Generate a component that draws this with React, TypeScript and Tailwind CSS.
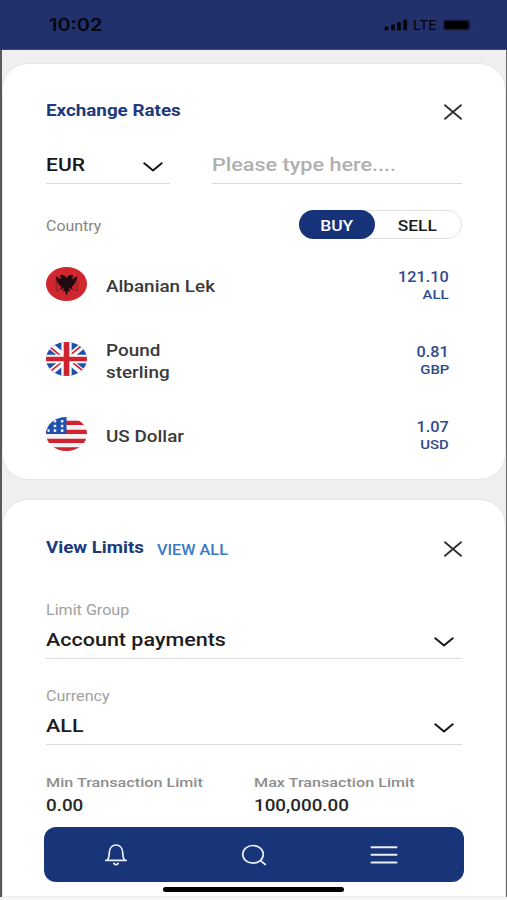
import { useState } from "react";
import type { ReactNode } from "react";
import clsx from "clsx";

const rates = [
  { code: "ALL", name: ["Albanian Lek"], rate: "121.10", flag: <AlbaniaFlag /> },
  { code: "GBP", name: ["Pound", "sterling"], rate: "0.81", flag: <UkFlag /> },
  { code: "USD", name: ["US Dollar"], rate: "1.07", flag: <UsFlag /> },
];

// Wide lettering: the label is stretched sideways from its left edge
function Wide({ children, className }: { children: ReactNode; className?: string }) {
  return (
    <span className={clsx("inline-block whitespace-nowrap", className ?? "origin-left scale-x-[1.19]")}>
      {children}
    </span>
  );
}

function AlbaniaFlag() {
  return (
    <svg viewBox="0 0 40 40" preserveAspectRatio="none" className="h-[34px] w-[41px]">
      <circle cx="20" cy="20" r="20" fill="#cf2630" />
      <path d="M10 11.500v17M30 11.500v17M10 28l7-3M30 28l-7-3" stroke="#7a1a22" strokeWidth="0.9" />
      <path
        d="M20 14l-1.500-3-3-1.500-2 1.500 2 1.500-1.500 2-4-3 1 5 1 .500-.500 2 2 .500-.500 2.500 2.500 0-1 3.500 3-1.500 .500 2-1.500 2 2.500 0 1 4.500 1-4.500 2.500 0-1.500-2 .500-2 3 1.500-1-3.500 2.500 0-.500-2.500 2-.500-.500-2 1-.500 1-5-4 3-1.500-2 2-1.500-2-1.500-3 1.500z"
        fill="#1d0b10"
        stroke="#1d0b10"
        strokeWidth="0.8"
      />
    </svg>
  );
}

function UkFlag() {
  return (
    <svg viewBox="0 0 40 40" preserveAspectRatio="none" className="h-[34px] w-[41px]">
      <clipPath id="uk-clip">
        <circle cx="20" cy="20" r="20" />
      </clipPath>
      <g clipPath="url(#uk-clip)">
        <rect width="40" height="40" fill="#1f50ad" />
        <path d="M3 3l34 34M37 3L3 37" stroke="#fff" strokeWidth="7" />
        <path d="M4 6l12 12M36 34L24 22M35 4L24 15M4 35l12-12" stroke="#d0232f" strokeWidth="1.8" />
        <path d="M20 0v40M0 20h40" stroke="#fff" strokeWidth="10" />
        <path d="M20 0v40M0 20h40" stroke="#d0232f" strokeWidth="5.5" />
      </g>
    </svg>
  );
}

function UsFlag() {
  return (
    <svg viewBox="0 0 40 40" preserveAspectRatio="none" className="h-[34px] w-[41px]">
      <clipPath id="us-clip">
        <circle cx="20" cy="20" r="20" />
      </clipPath>
      <g clipPath="url(#us-clip)">
        <rect width="40" height="40" fill="#f4f2f4" />
        <path d="M0 7h40M0 17.500h40M0 28h40M0 38h40" stroke="#d0232f" strokeWidth="5" />
        <rect width="20" height="20" fill="#1f50ad" />
        <path
          d="M7.500 5h2.500M14.500 5h2.500M7.500 10.500h2.500M14.500 10.500h2.500M7.500 16h2.500M14.500 16h2.500M1.500 16h2"
          stroke="#e6ecf7"
          strokeWidth="3"
        />
      </g>
    </svg>
  );
}

function CloseIcon() {
  return (
    <svg viewBox="0 0 20 16" className="h-4 w-5" fill="none" stroke="#2e2e2e" strokeWidth="1.8" strokeLinecap="round">
      <path d="M2 1.200l16 13.600M18 1.200L2 14.800" />
    </svg>
  );
}

function ChevronIcon() {
  return (
    <svg viewBox="0 0 20 10" className="h-2.5 w-5" fill="none" stroke="#151515" strokeWidth="2" strokeLinecap="round" strokeLinejoin="round">
      <path d="M1.300 1.300L10 8.400l8.700-7.100" />
    </svg>
  );
}

function StatusBar() {
  return (
    <header className="flex h-[50px] items-center justify-between border-b border-[#3d4a7c] bg-[#22316c] pr-[32px] pl-[49px] text-[#05070f]">
      <span className="mt-px origin-left scale-x-[1.17] font-[Inter,sans-serif] text-[17px] leading-none font-semibold">10:02</span>
      <div className="flex items-center">
        <svg viewBox="0 0 24 12" className="h-3 w-6" fill="#05070f">
          <rect x="0.500" y="7.500" width="4" height="4" rx="1" />
          <rect x="7" y="5.500" width="4" height="6" rx="1" />
          <rect x="13" y="3" width="4" height="8.500" rx="1" />
          <rect x="19.200" y="0.500" width="4" height="11" rx="1" />
        </svg>
        <span className="mt-px ml-[5px] w-[24px] origin-left scale-x-[1.05] font-[Inter,sans-serif] text-[13px] leading-none font-medium">LTE</span>
        <svg viewBox="0 0 32 12" className="ml-[6px] h-3 w-8">
          <rect x="0" y="0.500" width="27" height="11" rx="3" fill="#141c42" />
          <rect x="1.500" y="2" width="24" height="8" rx="2" fill="#000" />
          <path d="M28.500 4v4q2-2 0-4z" fill="#182250" />
        </svg>
      </div>
    </header>
  );
}

function ExchangeRates() {
  const [side, setSide] = useState<"BUY" | "SELL">("BUY");

  return (
    <section className="h-[417px] rounded-[26px] border border-[#e6e6e6] bg-white px-[43px] pt-[32px]">
      <div className="flex h-[30px] items-center justify-between">
        <h2 className="text-[16px] font-bold text-[#1c3a7c]">
          <Wide className="origin-left scale-x-[1.175]">Exchange Rates</Wide>
        </h2>
        <button className="mt-[2px] -mr-px">
          <CloseIcon />
        </button>
      </div>

      <div className="mt-[22px] flex h-[36px] gap-[42px]">
        <div className="flex w-[124px] items-center justify-between border-b border-[#d9d9d9] pr-[7px] text-[18px] font-medium text-[#191919]">
          <Wide className="-mt-[2px] origin-left scale-x-[1.17]">EUR</Wide>
          <span className="mt-[3px]">
            <ChevronIcon />
          </span>
        </div>
        <div className="flex flex-1 items-center border-b border-[#d9d9d9] text-[18px] font-medium text-[#b0b0b0]">
          <Wide className="-mt-[2px] origin-left scale-x-[1.2]">Please type here....</Wide>
        </div>
      </div>

      <div className="mt-[26px] flex h-[29px] items-center justify-between">
        <span className="mt-[3px] text-[14px] text-[#858585]">
          <Wide className="origin-left scale-x-[1.14]">Country</Wide>
        </span>
        <div className="flex h-[29px] w-[163px] rounded-full border border-[#e2e2e2] text-[14.5px] font-medium">
          {(["BUY", "SELL"] as const).map((s) => (
            <button
              key={s}
              onClick={() => setSide(s)}
              className={clsx(
                "-my-px -ml-px flex items-center justify-center rounded-full pt-[4px]",
                s === "BUY" ? "w-[77px]" : "w-[89px]",
                side === s ? "bg-[#163379] text-white" : "text-[#1c1c1c]"
              )}
            >
              <Wide className="scale-x-[1.2]">{s}</Wide>
            </button>
          ))}
        </div>
      </div>

      <ul className="mt-[7px]">
        {rates.map((r) => (
          <li key={r.code} className="flex h-[75px] items-center">
            {r.flag}
            <div className="mt-[6px] ml-[19px] flex w-[75px] flex-col items-start text-[16px] leading-[22px] font-medium text-[#3a3a3a]">
              {r.name.map((line) => (
                <Wide key={line} className="origin-left scale-x-[1.18]">
                  {line}
                </Wide>
              ))}
            </div>
            <div className="mt-[4px] mr-[13px] ml-auto flex flex-col items-end leading-[17px] font-medium text-[#304a8c]">
              <Wide className="origin-right scale-x-[1.16] text-[14px]">{r.rate}</Wide>
              <Wide className="origin-right scale-x-[1.15] text-[13px]">{r.code}</Wide>
            </div>
          </li>
        ))}
      </ul>
    </section>
  );
}

function SelectField({ label, value }: { label: string; value: string }) {
  return (
    <div className="h-[86px]">
      <div className="text-[14px] leading-[20px] text-[#a0a0a0]">
        <Wide className="origin-left scale-x-[1.15]">{label}</Wide>
      </div>
      <div className="flex h-[39px] items-center justify-between border-b border-[#dcdcdc] pr-2 text-[18px] font-medium text-[#1c1c1c]">
        <Wide className="mt-px origin-left scale-x-[1.195]">{value}</Wide>
        <span className="mt-[5px]">
          <ChevronIcon />
        </span>
      </div>
    </div>
  );
}

function Amount({ label, value }: { label: string; value: string }) {
  return (
    <div className="w-[208px]">
      <div className="text-[13.5px] leading-[20px] font-medium text-[#8e8e8e]">
        <Wide className="origin-left scale-x-[1.197]">{label}</Wide>
      </div>
      <div className="mt-[2px] text-[16px] leading-[24px] font-medium text-[#262626]">
        <Wide className="origin-left scale-x-[1.175]">{value}</Wide>
      </div>
    </div>
  );
}

function ViewLimits() {
  return (
    <section className="mt-[19px] h-[397px] rounded-t-[26px] border border-b-0 border-[#e6e6e6] bg-white px-[43px] pt-[33px]">
      <div className="flex h-[30px] items-center">
        <h2 className="w-[111px] text-[16px] font-bold text-[#1c3a7c]">
          <Wide className="origin-left scale-x-[1.17]">View Limits</Wide>
        </h2>
        <a className="mt-1 text-[14px] font-medium text-[#3b78c6]">
          <Wide className="origin-left scale-x-[1.16]">VIEW ALL</Wide>
        </a>
        <button className="mt-px -mr-px ml-auto">
          <CloseIcon />
        </button>
      </div>
      <div className="mt-[37px]">
        <SelectField label="Limit Group" value="Account payments" />
        <SelectField label="Currency" value="ALL" />
      </div>
      <div className="flex">
        <Amount label="Min Transaction Limit" value="0.00" />
        <Amount label="Max Transaction Limit" value="100,000.00" />
      </div>
    </section>
  );
}

function BottomNav() {
  return (
    <div className="absolute inset-x-0 bottom-0 flex h-[73px] flex-col items-center">
      <nav className="flex h-[55px] w-[420px] items-center rounded-[12px] bg-[#183579] pl-[60px]">
        <button>
          <svg viewBox="0 0 24 24" className="h-6 w-6" fill="none" stroke="#e9eefb" strokeWidth="1.7" strokeLinecap="round" strokeLinejoin="round">
            <path d="M1.800 17.300h20.400M3.500 17C5.300 15 5 13 5.300 9.500 5.600 5 8.300 2 12 2s6.400 3 6.700 7.500c.3 3.500 0 5.500 1.800 7.500" />
            <path d="M9.800 20.300c.8 1.700 3.600 1.700 4.400 0" />
          </svg>
        </button>
        <button className="ml-[113px]">
          <svg viewBox="0 0 26 24" className="h-6 w-[26px]" fill="none" stroke="#e9eefb" strokeWidth="1.700" strokeLinecap="round">
            <ellipse cx="12" cy="11.300" rx="10.300" ry="8.800" />
            <path d="M19.500 17.700l4.800 3.800" />
          </svg>
        </button>
        <button className="ml-[102px]">
          <svg viewBox="0 0 30 20" className="h-5 w-[30px]" fill="none" stroke="#e9eefb" strokeWidth="2" strokeLinecap="round">
            <path d="M2.500 2.200h25M2.500 9.700h25M2.500 17.500h25" />
          </svg>
        </button>
      </nav>
      <div className="mt-[5px] h-[5px] w-[181px] rounded-full bg-black" />
      <div className="mt-auto h-[3px] w-full bg-[#f5f5f5]" />
    </div>
  );
}

export default function App() {
  return (
    <div className="relative h-[900px] w-[507px] overflow-hidden bg-[#efefef] font-[Roboto,sans-serif]">
      <StatusBar />
      <main className="h-[850px] border-r border-l-2 border-r-[#6b6b6e] border-l-[#58585b] pt-[13px]">
        <ExchangeRates />
        <ViewLimits />
      </main>
      <BottomNav />
    </div>
  );
}
